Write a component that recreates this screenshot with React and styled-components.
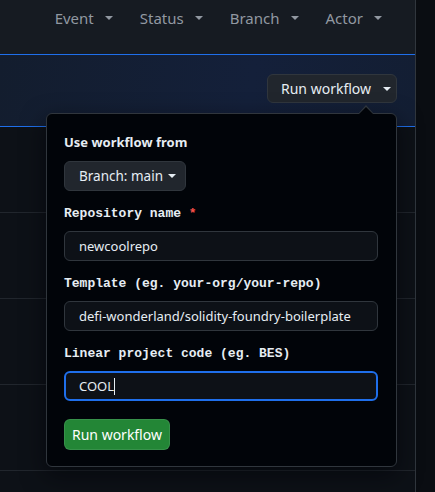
import React from 'react'
import styled, { createGlobalStyle } from 'styled-components'

const GlobalStyle = createGlobalStyle`
    body {
        margin: 0;
        background: #0a0d12;
        font-family: "Noto Sans", "Liberation Sans", sans-serif;
        color: #e6edf3;
    }
`

function Caret({ color = '#9198a1', size = 8 }) {
    return (
        <svg width={size} height={size / 2} viewBox="0 0 8 4">
            <path d="M0 0h8L4 4z" fill={color} />
        </svg>
    )
}

function Filter(props) {
    return (
        <FilterItem>
            {props.label}
            <Caret />
        </FilterItem>
    )
}

function Field(props) {
    return (
        <FieldGroup>
            <Label>
                {props.label}
                {props.required && <Required> *</Required>}
            </Label>
            <Input focused={props.focused}>
                {props.value}
                {props.focused && <Cursor />}
            </Input>
        </FieldGroup>
    )
}

export default function App() {
    return (
        <Page>
            <GlobalStyle />
            <Main>
                <Header>
                    <Filter label="Event" />
                    <Filter label="Status" />
                    <Filter label="Branch" />
                    <Filter label="Actor" />
                </Header>
                <Banner>
                    <Anchor>
                        <DropButton>
                            Run workflow
                            <Caret color="#e6edf3" />
                        </DropButton>
                        <Popover>
                            <Heading>Use workflow from</Heading>
                            <BranchButton>
                                Branch: main
                                <Caret color="#e6edf3" />
                            </BranchButton>
                            <Fields>
                                <Field label="Repository name" required value="newcoolrepo" />
                                <Field label="Template (eg. your-org/your-repo)" value="defi-wonderland/solidity-foundry-boilerplate" />
                                <Field label="Linear project code (eg. BES)" value="COOL" focused />
                            </Fields>
                            <GreenButton>Run workflow</GreenButton>
                        </Popover>
                    </Anchor>
                </Banner>
                <Row />
                <Row />
                <Row />
                <Row />
                <Row />
            </Main>
            <Side />
        </Page>
    )
}

const Page = styled.div`
    display: flex;
    width: 435px;
    height: 492px;
    overflow: hidden;
`

const Main = styled.div`
    width: 415px;
    flex-shrink: 0;
    border-right: 1px solid #30363d;
    background: #0d1117;
    display: flex;
    flex-direction: column;
`

const Side = styled.div`
    flex: 1;
    background: #0a0d12;
`

const Header = styled.div`
    height: 55px;
    flex-shrink: 0;
    background: #161b22;
    display: flex;
    justify-content: flex-end;
    align-items: flex-start;
    gap: 27px;
    padding: 8px 33px 0 0;
    box-sizing: border-box;
    border-bottom: 1px solid #1f6feb;
`

const FilterItem = styled.div`
    display: flex;
    align-items: center;
    gap: 11px;
    font-size: 15px;
    line-height: 20px;
    color: #9198a1;
`

const Banner = styled.div`
    height: 72px;
    flex-shrink: 0;
    box-sizing: border-box;
    border-bottom: 1px solid #1f6feb;
    background: linear-gradient(100deg, #131d2e 0%, #14203a 60%, #131e33 100%);
    display: flex;
    justify-content: flex-end;
    align-items: flex-start;
    padding: 19px 18px 0 0;
    position: relative;
    z-index: 2;
`

const Anchor = styled.div`
    position: relative;
`

const DropButton = styled.div`
    height: 29px;
    width: 130px;
    box-sizing: border-box;
    background: #21262d;
    border: 1px solid #30363d;
    border-radius: 6px;
    display: flex;
    align-items: center;
    padding: 0 0 0 13px;
    gap: 12px;
    font-size: 14px;
    color: #e6edf3;
`

const Popover = styled.div`
    position: absolute;
    top: 39px;
    right: 0;
    width: 351px;
    height: 354px;
    box-sizing: border-box;
    background: #010409;
    border: 1px solid #30363d;
    border-radius: 6px;
    padding: 18px 17px 0 17px;
    box-shadow: 0 8px 24px rgba(1, 4, 9, 0.6);
    &::before {
        content: '';
        position: absolute;
        top: -9px;
        right: 22px;
        border: 8px solid transparent;
        border-top: 0;
        border-bottom: 9px solid #30363d;
    }
    &::after {
        content: '';
        position: absolute;
        top: -7px;
        right: 23px;
        border: 7px solid transparent;
        border-top: 0;
        border-bottom: 7px solid #010409;
    }
`

const Heading = styled.div`
    font-size: 13px;
    font-weight: 700;
    line-height: 20px;
    margin-bottom: 9px;
`

const BranchButton = styled.div`
    display: inline-flex;
    align-items: center;
    gap: 5px;
    height: 30px;
    width: 122px;
    box-sizing: border-box;
    padding: 0 0 0 14px;
    background: #21262d;
    border: 1px solid #30363d;
    border-radius: 6px;
    font-size: 13.5px;
`

const Fields = styled.div`
    display: flex;
    flex-direction: column;
    gap: 13px;
    margin-top: 13px;
`

const FieldGroup = styled.div`
    display: flex;
    flex-direction: column;
    gap: 7px;
`

const Label = styled.div`
    font-family: "Liberation Mono", "DejaVu Sans Mono", monospace;
    font-size: 13px;
    font-weight: 700;
    line-height: 20px;
    color: #e6edf3;
`

const Required = styled.span`
    color: #f85149;
`

const Input = styled.div`
    height: 30px;
    width: 314px;
    box-sizing: border-box;
    background: #0d1117;
    border: ${p => (p.focused ? '2px solid #1f6feb' : '1px solid #30363d')};
    border-radius: 6px;
    padding: 0 0 0 ${p => (p.focused ? 13 : 14)}px;
    display: flex;
    align-items: center;
    font-size: 13px;
    color: #e6edf3;
`

const Cursor = styled.span`
    width: 1px;
    height: 17px;
    background: #e6edf3;
`

const GreenButton = styled.div`
    margin-top: 18px;
    display: inline-flex;
    align-items: center;
    justify-content: center;
    height: 31px;
    width: 106px;
    box-sizing: border-box;
    background: #238636;
    border: 1px solid rgba(240, 246, 252, 0.1);
    border-radius: 6px;
    font-size: 14px;
    color: #ffffff;
`

const Row = styled.div`
    height: 86px;
    flex-shrink: 0;
    border-bottom: 1px solid #21262d;
    box-sizing: border-box;
`
